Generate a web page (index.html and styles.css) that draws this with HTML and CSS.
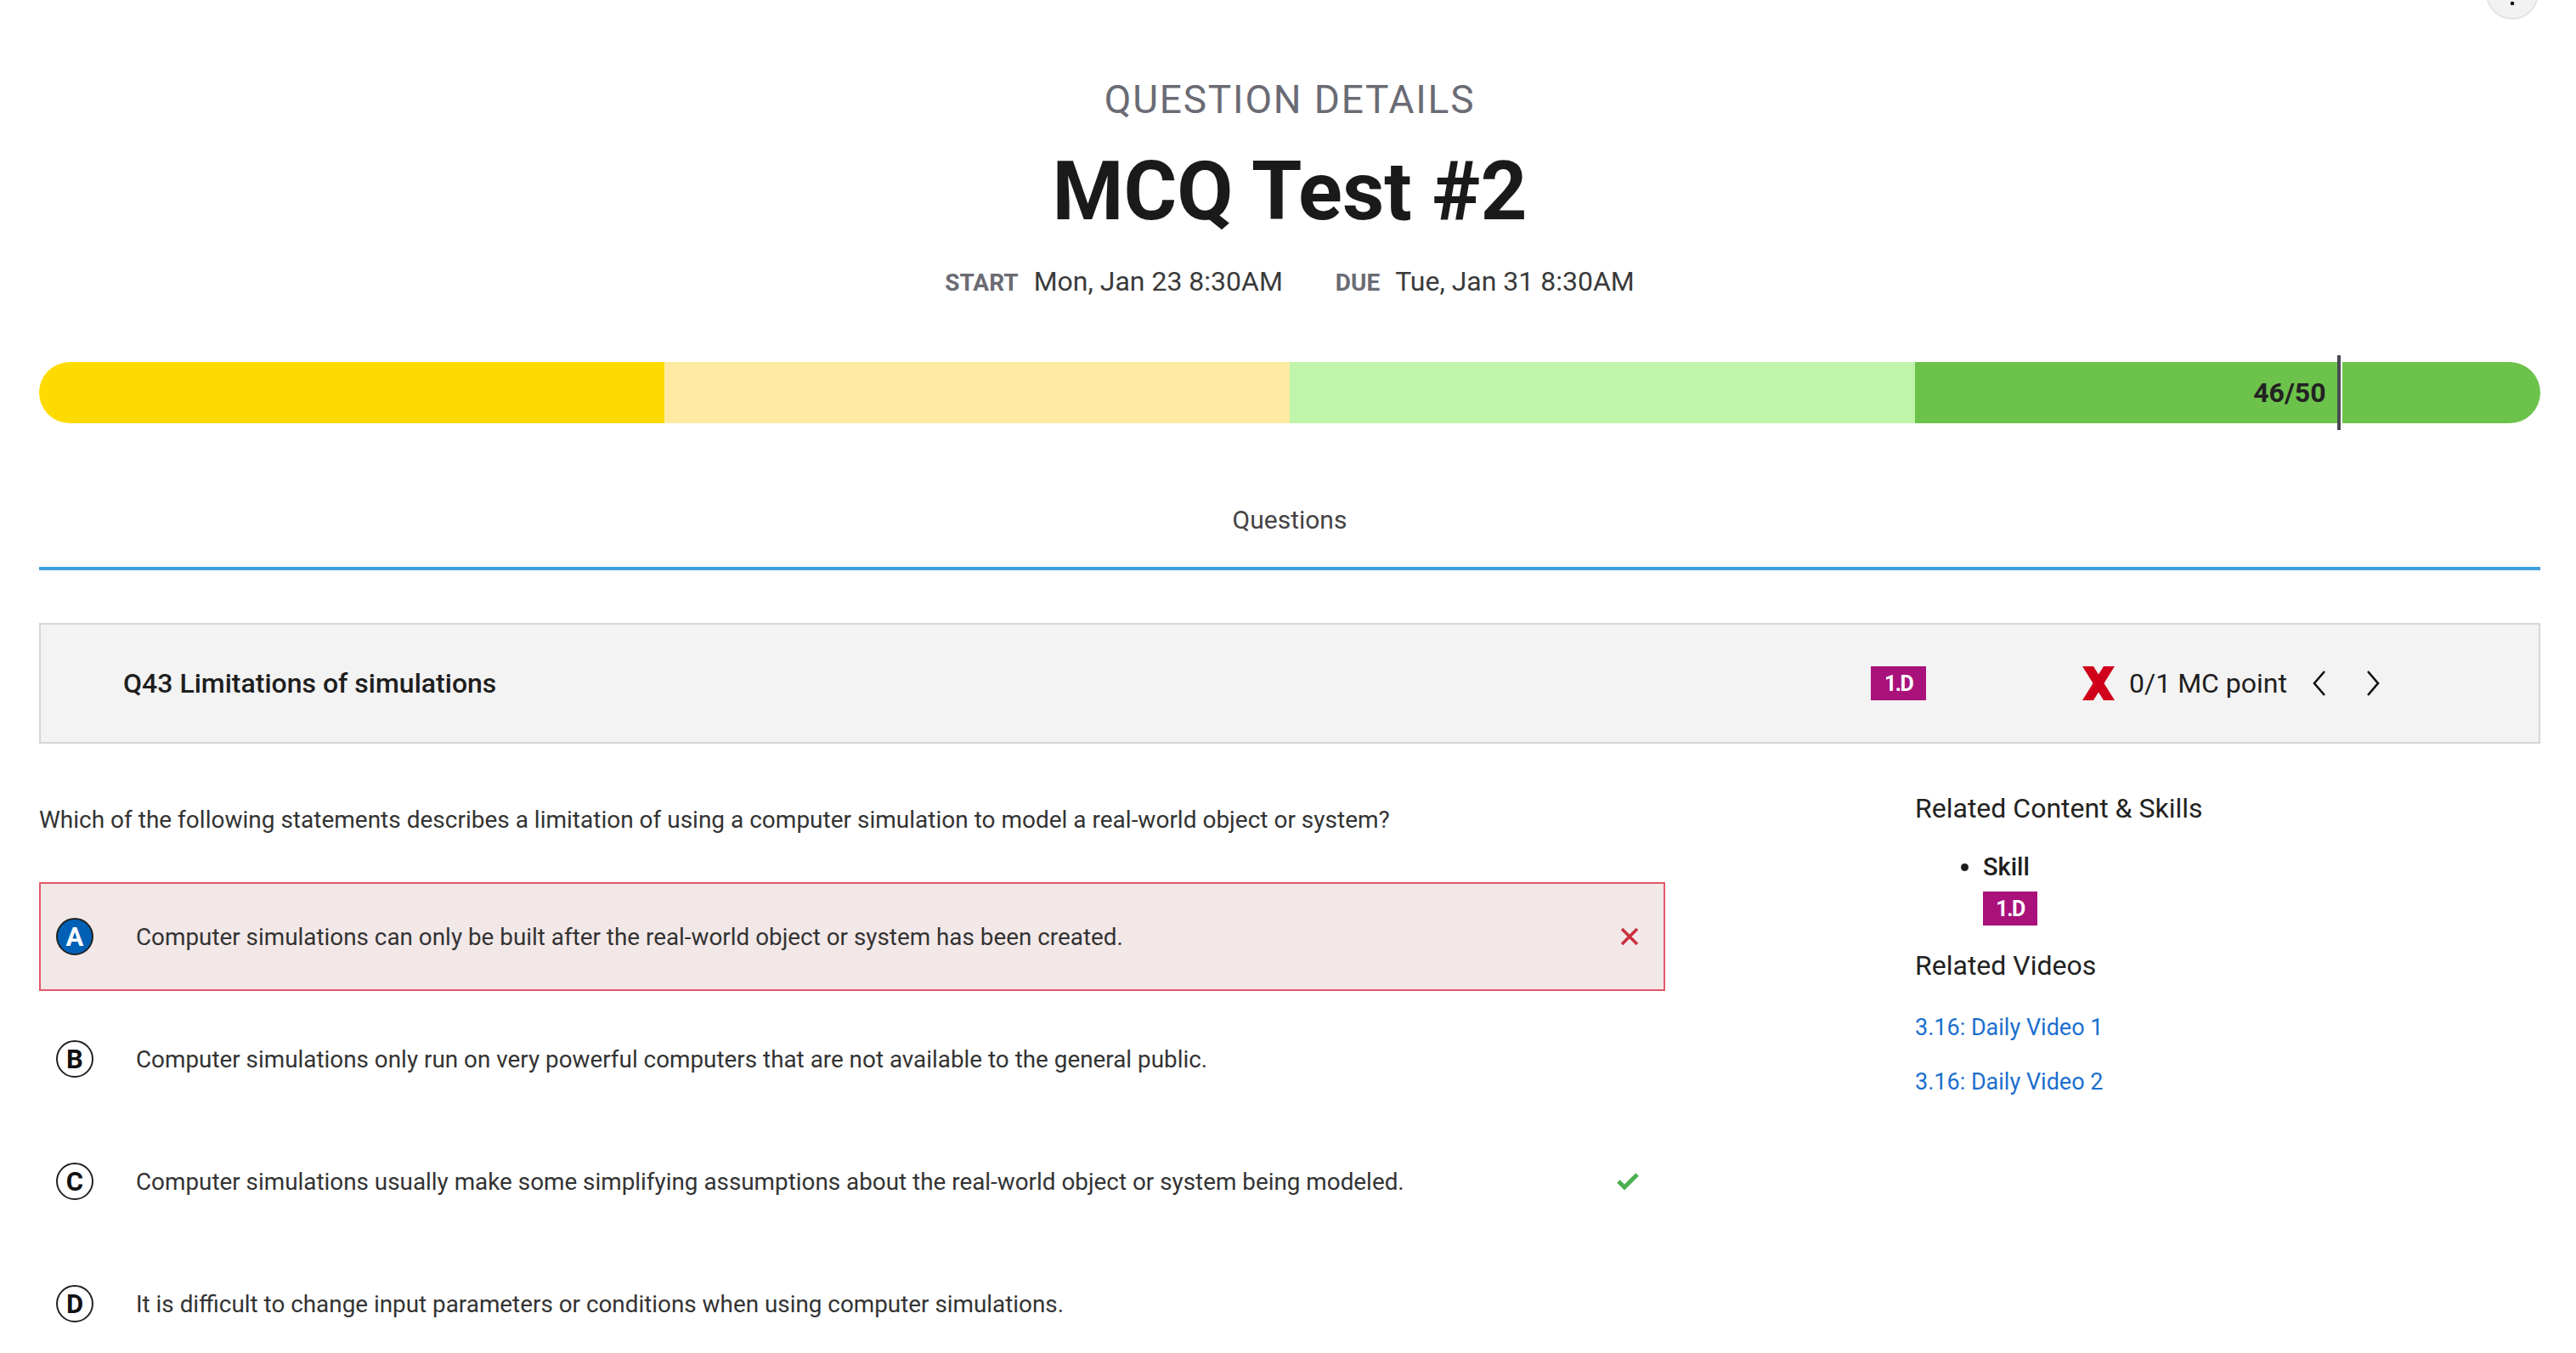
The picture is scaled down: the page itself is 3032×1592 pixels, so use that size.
FILE: index.html
```html
<!DOCTYPE html>
<html lang="en">
<head>
<meta charset="utf-8">
<title>Question Details - MCQ Test #2</title>
<link rel="stylesheet" href="styles.css">
</head>
<body>
<div class="fab">
  <svg width="62" height="62" viewBox="0 0 62 62"><circle cx="31" cy="19" r="2.3" fill="#111"/><circle cx="31" cy="31" r="2.3" fill="#111"/><circle cx="31" cy="43" r="2.3" fill="#111"/></svg>
</div>
<main class="page">
  <header class="hero">
    <div class="eyebrow">QUESTION DETAILS</div>
    <h1 class="title">MCQ Test #2</h1>
    <div class="dates">
      <span class="dlabel">START</span><span class="dval">Mon, Jan 23 8:30AM</span>
      <span class="dlabel due">DUE</span><span class="dval">Tue, Jan 31 8:30AM</span>
    </div>
  </header>

  <div class="progress">
    <div class="bar">
      <div class="seg s1"></div>
      <div class="seg s2"></div>
      <div class="seg s3"></div>
      <div class="seg s4"></div>
    </div>
    <span class="score">46/50</span>
    <span class="marker" style="left:92%"></span>
  </div>

  <nav class="tabs"><span class="tab">Questions</span></nav>

  <section class="qhead">
    <div class="qtitle">Q43 Limitations of simulations</div>
    <span class="badge">1.D</span>
    <div class="points">
      <svg class="bigx" width="40" height="40" viewBox="0 0 40 40"><polygon points="1,0 14,0 39,40 26,40" fill="#d0021b"/><polygon points="26,0 39,0 14,40 1,40" fill="#d0021b"/></svg>
      <span class="ptext">0/1 MC point</span>
      <svg class="chev" width="18" height="30" viewBox="0 0 18 30"><polyline points="15,1 3,15 15,29" fill="none" stroke="#111" stroke-width="2.6"/></svg>
      <svg class="chev next" width="18" height="30" viewBox="0 0 18 30"><polyline points="3,1 15,15 3,29" fill="none" stroke="#111" stroke-width="2.6"/></svg>
    </div>
  </section>

  <div class="body">
    <div class="main">
      <p class="qtext">Which of the following statements describes a limitation of using a computer simulation to model a real-world object or system?</p>
      <div class="options">
        <div class="option wrong">
          <span class="letter sel">A</span>
          <span class="otext">Computer simulations can only be built after the real-world object or system has been created.</span>
          <svg class="mark" width="22" height="22" viewBox="0 0 22 22"><path d="M2 2 L20 20 M20 2 L2 20" stroke="#c8303f" stroke-width="3.6" fill="none"/></svg>
        </div>
        <div class="option">
          <span class="letter">B</span>
          <span class="otext">Computer simulations only run on very powerful computers that are not available to the general public.</span>
        </div>
        <div class="option">
          <span class="letter">C</span>
          <span class="otext">Computer simulations usually make some simplifying assumptions about the real-world object or system being modeled.</span>
          <svg class="mark" width="26" height="22" viewBox="0 0 26 22"><polyline points="2,11 9,18 24,3" stroke="#4caf50" stroke-width="5" fill="none"/></svg>
        </div>
        <div class="option">
          <span class="letter">D</span>
          <span class="otext">It is difficult to change input parameters or conditions when using computer simulations.</span>
        </div>
      </div>
    </div>
    <aside class="side">
      <h2 class="shead">Related Content &amp; Skills</h2>
      <ul class="skills">
        <li><span class="skill">Skill</span><br><span class="badge small">1.D</span></li>
      </ul>
      <h2 class="shead videos">Related Videos</h2>
      <a class="vlink" href="#">3.16: Daily Video 1</a>
      <a class="vlink" href="#">3.16: Daily Video 2</a>
    </aside>
  </div>
</main>
</body>
</html>
```
FILE: styles.css
```css
* { box-sizing: border-box; }

html, body {
  margin: 0;
  padding: 0;
  background: #ffffff;
}

body {
  font-family: Roboto, "Liberation Sans", Arial, sans-serif;
  color: #222;
  position: relative;
  overflow: hidden;
}

.fab {
  position: absolute;
  top: -39px;
  right: 44px;
  width: 62px;
  height: 62px;
  border-radius: 50%;
  background: #f2f2f2;
  border: 2px solid #e4e4e4;
}
.fab svg { position: absolute; top: -2px; left: -2px; }

.page {
  padding: 0 42px 0 46px;
}

/* hero */
.hero {
  padding-top: 90px;
  text-align: center;
}
.eyebrow {
  font-size: 46px;
  line-height: 54px;
  letter-spacing: 1.8px;
  color: #6b6b74;
}
.title {
  margin: 25px 0 0;
  font-size: 96px;
  line-height: 112px;
  font-weight: 700;
  color: #1a1a1a;
}
.dates {
  margin-top: 32px;
  display: flex;
  justify-content: center;
  align-items: baseline;
  line-height: 36px;
}
.dlabel {
  font-size: 28px;
  font-weight: 700;
  color: #6b6b74;
  margin-right: 18px;
}
.dlabel.due { margin-left: 62px; }
.dval {
  font-size: 32px;
  color: #3a3a3a;
}

/* progress */
.progress {
  position: relative;
  margin-top: 75px;
  height: 72px;
}
.bar {
  display: flex;
  height: 72px;
  border-radius: 36px;
  overflow: hidden;
}
.seg { flex: 1; }
.s1 { background: #fddb00; }
.s2 { background: #feeba1; }
.s3 { background: #c0f4aa; }
.s4 { background: #6cc24b; }
.score {
  position: absolute;
  top: 0;
  right: calc(8% + 17px);
  line-height: 72px;
  font-size: 32px;
  font-weight: 700;
  color: #222;
}
.marker {
  position: absolute;
  top: -8px;
  bottom: -8px;
  width: 6px;
  margin-left: -3px;
  background: #4a4a55;
  border-right: 2px solid #fff;
}

/* tabs */
.tabs {
  margin-top: 96px;
  text-align: center;
  border-bottom: 4px solid #3f9fdc;
  padding-bottom: 37px;
}
.tab {
  display: inline-block;
  font-size: 30px;
  line-height: 36px;
  color: #444;
}

/* question header */
.qhead {
  margin-top: 62px;
  height: 142px;
  border: 2px solid #d6d6d9;
  background: #f3f3f3;
  display: flex;
  align-items: center;
  padding: 0 186px 0 97px;
}
.qtitle {
  flex: 1;
  font-size: 32px;
  font-weight: 500;
  color: #1e1e1e;
}
.badge {
  display: inline-flex;
  align-items: center;
  justify-content: center;
  width: 65px;
  height: 40px;
  background: #a8127a;
  color: #fff;
  font-size: 25px;
  font-weight: 700;
  letter-spacing: -1.5px;
}
.points {
  margin-left: 183px;
  display: flex;
  align-items: center;
}
.ptext {
  margin-left: 16px;
  font-size: 32px;
  color: #1e1e1e;
}
.chev { margin-left: 29px; }
.chev.next { margin-left: 45px; }

/* body */
.body {
  margin-top: 56px;
  display: flex;
  align-items: flex-start;
}
.main {
  width: 65%;
  padding-top: 14px;
}
.qtext {
  margin: 0;
  font-size: 28px;
  line-height: 40px;
  color: #333;
}
.options {
  margin-top: 53px;
  display: flex;
  flex-direction: column;
  gap: 16px;
}
.option {
  display: flex;
  align-items: center;
  height: 128px;
  border: 2px solid transparent;
  padding: 0 29px 0 18px;
}
.option.wrong {
  border-color: #e25767;
  background: #f3e8e8;
}
.letter {
  flex: none;
  width: 44px;
  height: 44px;
  border-radius: 50%;
  border: 2.5px solid #222;
  display: flex;
  align-items: center;
  justify-content: center;
  font-size: 31px;
  font-weight: 700;
  color: #111;
  background: #fff;
}
.letter.sel {
  background: #0060b6;
  color: #fff;
}
.otext {
  flex: 1;
  margin-left: 50px;
  font-size: 27.85px;
  color: #333;
}
.mark { flex: none; }

/* side */
.side {
  margin-left: auto;
  width: 25%;
}
.shead {
  margin: 0;
  font-size: 32px;
  line-height: 40px;
  font-weight: 400;
  color: #222;
}
.skills {
  margin: 31px 0 0;
  padding-left: 80px;
  list-style: none;
}
.skills li { position: relative; }
.skills li::before {
  content: "";
  position: absolute;
  left: -26px;
  top: 14px;
  width: 9px;
  height: 9px;
  border-radius: 50%;
  background: #1e1e1e;
}
.skill {
  font-size: 29px;
  line-height: 36px;
  font-weight: 500;
  color: #1e1e1e;
}
.badge.small {
  margin-top: 11px;
  width: 64px;
}
.shead.videos { margin-top: 27px; }
.vlink {
  display: block;
  font-size: 27px;
  line-height: 64px;
  color: #1a6fce;
  text-decoration: none;
}
.shead.videos + .vlink { margin-top: 21px; }
```
